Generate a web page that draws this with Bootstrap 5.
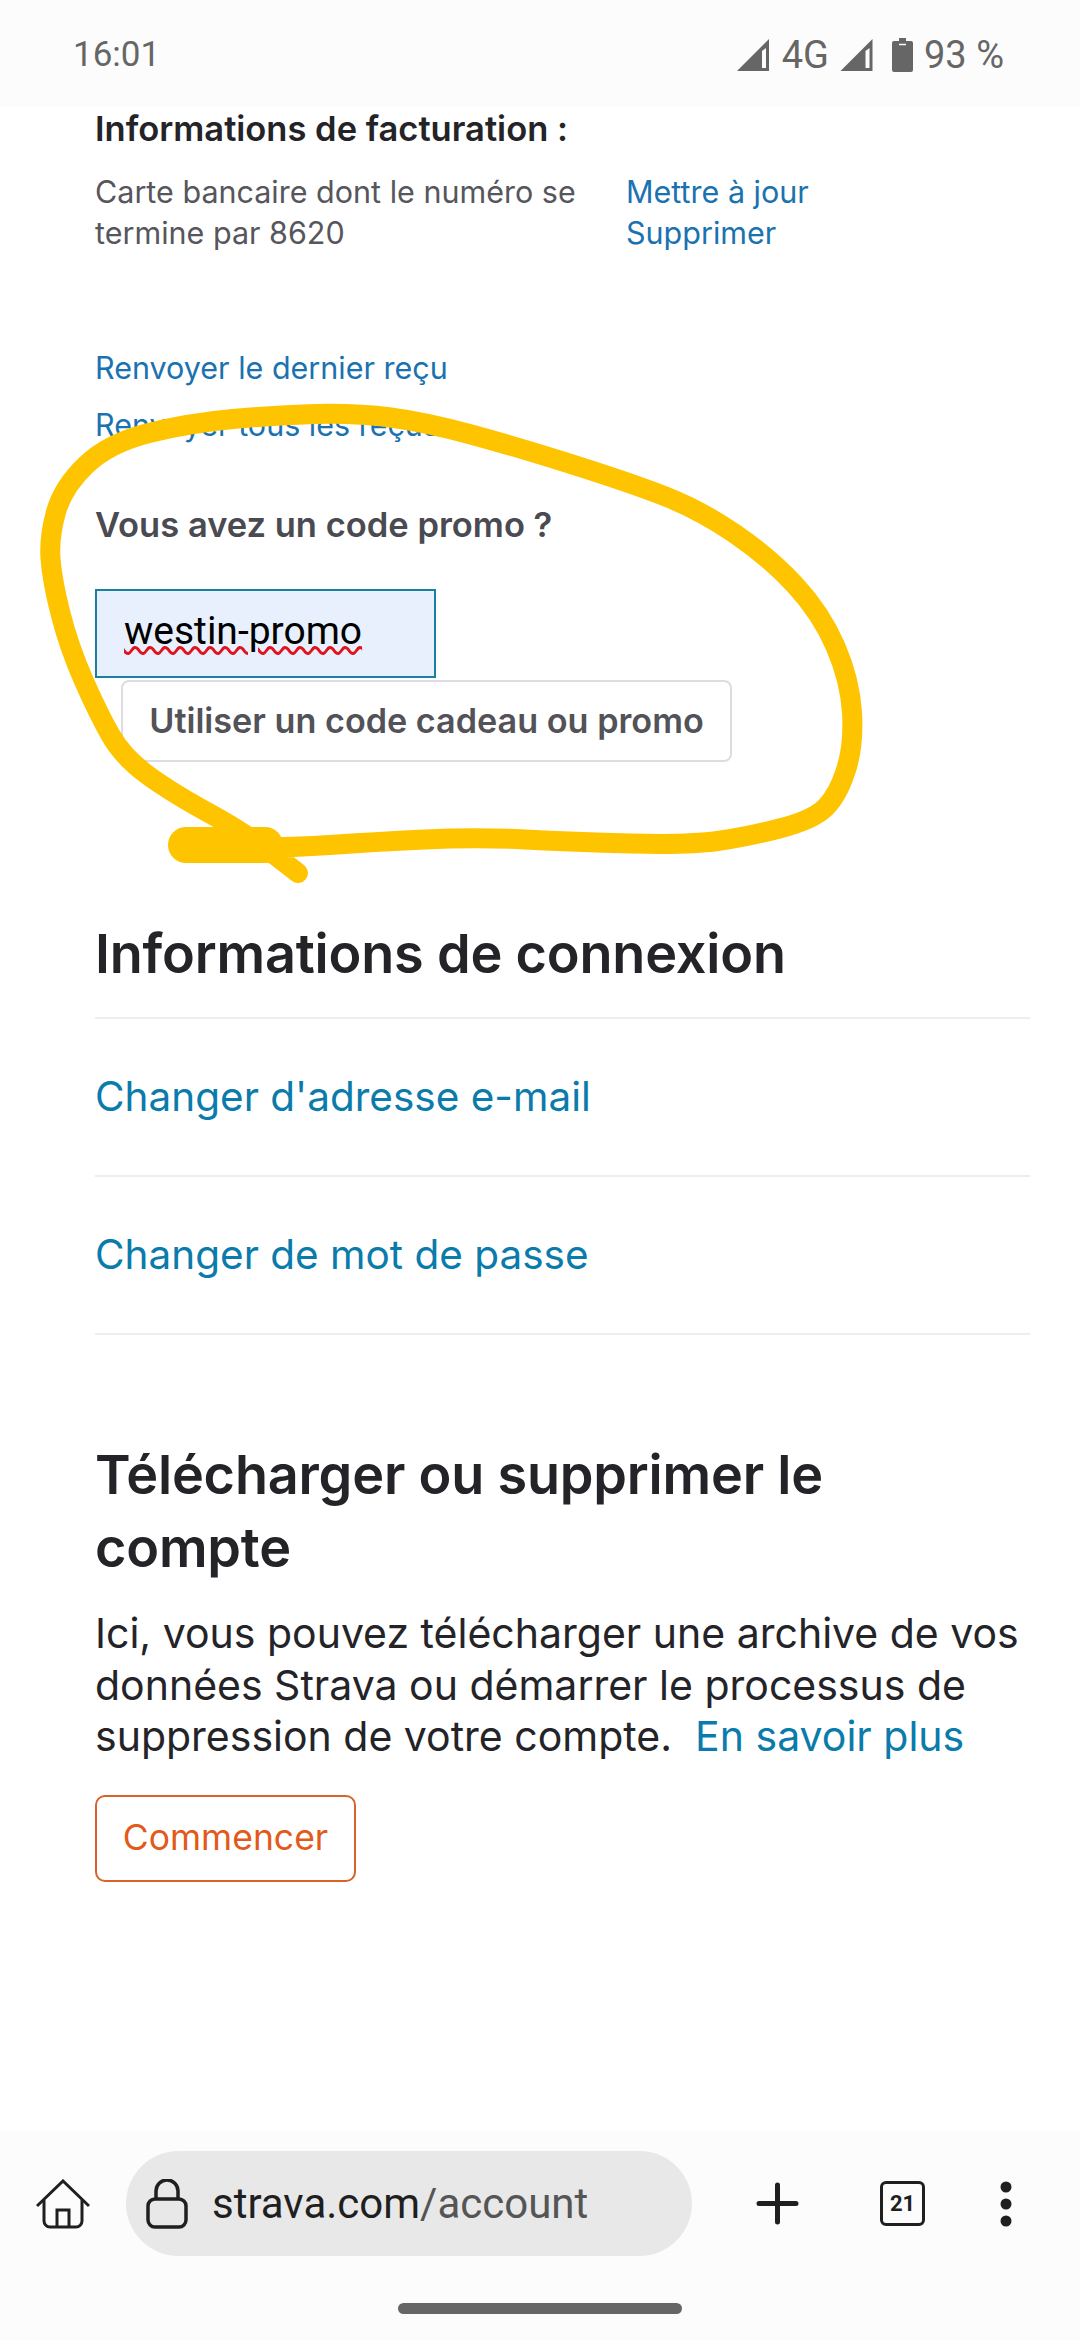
<!DOCTYPE html>
<html lang="fr">
<head>
    <meta charset="UTF-8">
    <meta name="viewport" content="width=device-width, initial-scale=1.0">
    <title>Strava account</title>
    <link href="https://cdn.jsdelivr.net/npm/bootstrap@5.3.0/dist/css/bootstrap.min.css" rel="stylesheet">
    <style>
        body { width: 1080px; height: 2340px; overflow: hidden; background: #fff; font-family: Inter, "Liberation Sans", sans-serif; color: #242428; position: relative; }
        a { text-decoration: none; }
        .status-strip { height: 107px; background: #fcfcfc; padding: 3px 76px 0 73px; color: #666; font-family: Roboto, sans-serif; font-size: 35px; }
        .status-icons { font-size: 38px; }
        .sig-a { margin-right: 13px; }
        .sig-b { margin: 0 19px 0 11px; }
        .batt { margin-right: 11px; }
        .page-body { height: 2023px; padding: 1px 50px 0 95px; }
        .billing-title { font-size: 34.500px; font-weight: 600; line-height: 42px; margin: 0; }
        .billing-row { margin-top: 21px; font-size: 30.500px; line-height: 41px; color: #56565c; }
        .billing-text { width: 531px; }
        .blue-link { color: #1a72b0; }
        .resend-links { margin-top: 94px; font-size: 30.500px; }
        .resend-links a { display: block; line-height: 41px; margin-bottom: 16px; }
        .promo-label { margin: 59px 0 0; font-size: 34.500px; line-height: 42px; font-weight: 600; color: #4a4a52; }
        .promo-input { width: 341px; height: 89px; margin-top: 43px; background: #e8f0fe; border: 2px solid #1a7fa0; padding: 0 0 5px 27px; display: flex; align-items: center; font-size: 39px; color: #000; font-family: Roboto, sans-serif; }
        .promo-input span { text-decoration: underline wavy #e0141e 3px; text-underline-offset: 2px; }
        .promo-btn { display: block; margin: 2px 0 0 26px; width: 611px; height: 82px; padding: 0; background: #fff; border: 2px solid #dcdce2; border-radius: 8px; font-size: 34.200px; font-weight: 600; color: #525258; }
        .section-title { font-size: 54px; font-weight: 600; line-height: 73px; margin: 0; color: #242428; letter-spacing: -0.2px; }
        .login-title { margin-top: 155px; padding-bottom: 27px; border-bottom: 2px solid #eeeeef; }
        .login-row { height: 158px; display: flex; align-items: center; border-bottom: 2px solid #eeeeef; font-size: 40.500px; color: #0a7bab; }
        .delete-title { margin-top: 103px; max-width: 800px; }
        .delete-text { margin: 24px 0 0; font-size: 41px; line-height: 51.500px; }
        .delete-text a { color: #0a7bab; }
        .start-btn { display: block; margin-top: 32px; width: 261px; height: 87px; padding: 0; background: #fff; border: 2px solid #d9622b; border-radius: 10px; color: #e2591a; font-size: 35.500px; }
        .browser-strip { height: 210px; background: #fcfcfc; }
        .top-row { height: 126px; padding: 21px 0 0 36px; }
        .url-pill { width: 566px; height: 105px; margin-left: 36px; border-radius: 53px; background: #e8e8e8; padding-left: 20px; font-family: Roboto, sans-serif; font-size: 42px; color: #1f1f1f; }
        .url-pill span span { color: #555; }
        .plus-icon { margin-left: 64px; }
        .tab-count { width: 45px; height: 45px; margin-left: 81px; border: 3px solid #1f1f1f; border-radius: 6px; font-size: 22px; font-weight: 700; color: #1f1f1f; font-family: Roboto, sans-serif; }
        .dots-icon { margin-left: 75px; }
        .home-bar { width: 284px; height: 11px; margin: 47px auto 0; border-radius: 6px; background: #666; }
        .scribble { position: absolute; left: 0; top: 0; pointer-events: none; }
    </style>
</head>
<body>
    <div class="status-strip d-flex justify-content-between align-items-center">
        <span>16:01</span>
        <div class="status-icons d-flex align-items-center">
            <svg class="sig-a" width="32" height="32" viewBox="0 0 32 32"><path d="M0 32 32 0V32Z" fill="#666"/><path d="M25 12V29H29V9Z" fill="#fcfcfc"/></svg>
            <span>4G</span>
            <svg class="sig-b" width="33" height="32" viewBox="0 0 32 32"><path d="M0 32 32 0V32Z" fill="#666"/><path d="M25 12V29H29V9Z" fill="#fcfcfc"/></svg>
            <svg class="batt" width="21" height="34" viewBox="0 0 21 34"><path d="M7 0h7v3h5a2 2 0 0 1 2 2v27a2 2 0 0 1-2 2H2a2 2 0 0 1-2-2V5a2 2 0 0 1 2-2h5Z" fill="#666"/><path d="M7 6.500h7" stroke="#fcfcfc" stroke-width="1.500"/></svg>
            <span>93 %</span>
        </div>
    </div>

    <div class="page-body">
        <h5 class="billing-title">Informations de facturation :</h5>
        <div class="billing-row d-flex">
            <div class="billing-text">Carte bancaire dont le numéro se termine par 8620</div>
            <div>
                <a class="blue-link d-block" href="#">Mettre à jour</a>
                <a class="blue-link d-block" href="#">Supprimer</a>
            </div>
        </div>
        <div class="resend-links">
            <a class="blue-link" href="#">Renvoyer le dernier reçu</a>
            <a class="blue-link" href="#">Renvoyer tous les reçus</a>
        </div>
        <p class="promo-label">Vous avez un code promo ?</p>
        <div class="promo-input"><span>westin-promo</span></div>
        <button class="promo-btn" type="button">Utiliser un code cadeau ou promo</button>

        <h2 class="section-title login-title">Informations de connexion</h2>
        <a class="login-row" href="#">Changer d'adresse e-mail</a>
        <a class="login-row" href="#">Changer de mot de passe</a>

        <h2 class="section-title delete-title">Télécharger ou supprimer le compte</h2>
        <p class="delete-text">Ici, vous pouvez télécharger une archive de vos données Strava ou démarrer le processus de suppression de votre compte. &nbsp;<a href="#">En savoir plus</a></p>
        <button class="start-btn" type="button">Commencer</button>
    </div>

    <div class="browser-strip">
        <div class="top-row d-flex align-items-center">
            <svg width="54" height="50" viewBox="0 0 54 50" fill="none" stroke="#1f1f1f" stroke-width="3"><path d="M1 27 27 2 53 27"/><path d="M8 21V42a6 6 0 0 0 6 6H40a6 6 0 0 0 6-6V21"/><path d="M21 48V31H33V48"/></svg>
            <div class="url-pill d-flex align-items-center">
                <svg width="42" height="50" viewBox="0 0 42 50" fill="none" stroke="#1f1f1f" stroke-width="3.500"><rect x="2" y="20" width="38" height="28" rx="7"/><path d="M10 20V12a11 11 0 0 1 22 0v8"/></svg>
                <span class="ms-4">strava.com<span>/account</span></span>
            </div>
            <svg class="plus-icon" width="43" height="43" viewBox="0 0 43 43" stroke="#1f1f1f" stroke-width="5" stroke-linecap="round"><path d="M3 21.500H40M21.500 3V40"/></svg>
            <div class="tab-count d-flex align-items-center justify-content-center">21</div>
            <svg class="dots-icon" width="12" height="46" viewBox="0 0 12 46" fill="#1f1f1f"><circle cx="6" cy="6" r="5.500"/><circle cx="6" cy="23" r="5.500"/><circle cx="6" cy="40" r="5.500"/></svg>
        </div>
        <div class="home-bar"></div>
    </div>

    <svg class="scribble" width="1080" height="2340" fill="none" stroke="#fec400" stroke-linecap="round" stroke-linejoin="round">
        <path id="loop" stroke-width="20"/>
        <path d="M186 845H265" stroke-width="36"/>
    </svg>
    <script>
        // hand-drawn loop, smoothed through its midpoints
        const pts = [[298,873],[253,837],[172,793],[123,757],[98,713],[69,647],[52,580],[49,537],[63,487],[109,443],[189,423],[276,415],[356,413],[425,422],[517,447],[631,483],[700,510],[769,557],[821,613],[850,680],[854,745],[838,795],[813,820],[746,837],[689,845],[574,842],[476,837],[373,842],[287,848],[184,847]];
        let d = `M${pts[0][0]} ${pts[0][1]}`;
        for (let i = 1; i < pts.length - 1; i++) {
            const mx = (pts[i][0] + pts[i + 1][0]) / 2;
            const my = (pts[i][1] + pts[i + 1][1]) / 2;
            d += `Q${pts[i][0]} ${pts[i][1]} ${mx} ${my}`;
        }
        d += `L${pts[pts.length - 1][0]} ${pts[pts.length - 1][1]}`;
        document.getElementById('loop').setAttribute('d', d);
    </script>
    <script src="https://cdn.jsdelivr.net/npm/bootstrap@5.3.0/dist/js/bootstrap.bundle.min.js"></script>
</body>
</html>
